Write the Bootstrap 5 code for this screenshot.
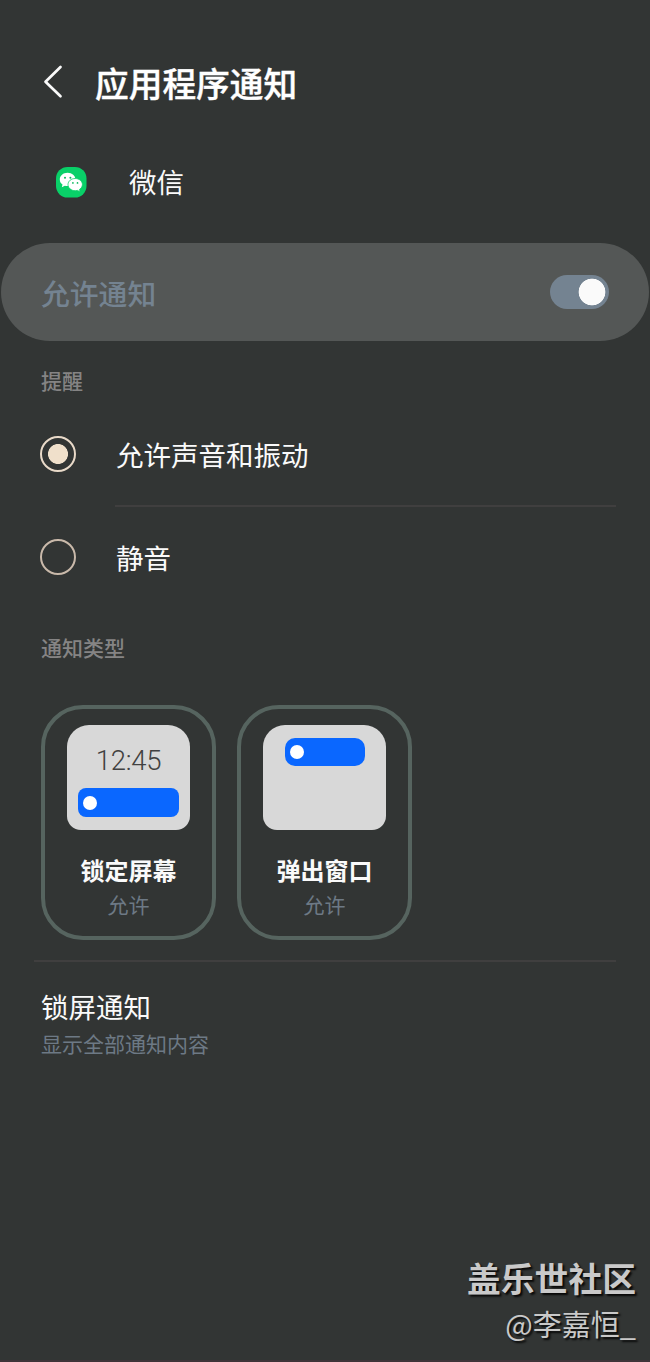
<!DOCTYPE html>
<html lang="zh-CN" data-bs-theme="dark">
<head>
<meta charset="utf-8">
<meta name="viewport" content="width=device-width, initial-scale=1">
<title>应用程序通知</title>
<link href="https://cdn.jsdelivr.net/npm/bootstrap@5.3.0/dist/css/bootstrap.min.css" rel="stylesheet">
<style>
  body { background: #323534; color: #fafafa; font-family: "Noto Sans CJK SC", sans-serif; }
  .screen { height: 1362px; border-bottom: 2px solid #3f3439; }
  .page-header { height: 56px; margin-top: 56px; padding-left: 42px; }
  .page-title { font-size: 33.7px; font-weight: 500; margin-left: 30px; padding-bottom: 2px; -webkit-text-stroke: .4px; }
  .app-row { height: 54px; margin-top: 43px; padding-left: 55px; }
  .item-text { font-size: 27.5px; line-height: 38px; padding-bottom: 2px; }
  .app-name { margin-left: 42px; }
  .switch-bar { height: 98px; margin: 33.5px 1px 0; padding: 0 40px; border-radius: 49px; background: #545756; }
  .switch-label { font-size: 28.8px; font-weight: 500; color: #748391; padding-top: 3px; }
  .form-check-input.toggle { width: 59px; height: 34px; margin: 0; border: 0; background-color: #748391; border-radius: 17px;
    background-image: radial-gradient(circle at 42px 17px, #fafafa 13px, transparent 13.7px); background-size: 100% 100%; opacity: 1; }
  .section-label { font-size: 21px; line-height: 30px; padding-bottom: 2px; font-weight: 500; color: #858484; padding-left: 41px; }
  .option-row { height: 101px; padding-left: 40px; gap: 40px; }
  .form-check-input.ring { width: 36px; height: 36px; margin: -1px 0 0; border: 2px solid #c9b9aa; background: transparent; }
  .form-check-input.ring:checked { border-color: #e9dac9; background: radial-gradient(circle, #f0e0cb 9.6px, transparent 10.3px); }
  .rule { height: 2px; margin-right: 34px; background: #403f3f; }
  .type-cards { gap: 21px; margin: 41px 0 0 41px; }
  .type-card { width: 175px; height: 235px; border: 4px solid #56645f; border-radius: 42px; padding-top: 16px; }
  .preview { width: 123px; height: 105px; border-radius: 22px 22px 14px 14px; background: #d8d8d8; }
  .clock { font: 300 27.5px/34px Roboto, sans-serif; letter-spacing: -.3px; color: #414141; margin-top: 19px; }
  .banner { background: #0a67ff; padding-left: 5px; }
  .banner-lock { width: 101px; height: 29px; border-radius: 8px; margin-top: 10px; }
  .banner-pop { width: 80px; height: 28px; border-radius: 10px; margin-top: 13px; }
  .dot { width: 14px; height: 14px; background: #fff; }
  .card-name { font-size: 24px; line-height: 36px; font-weight: 700; margin-top: 22px; }
  .sub { font-size: 21px; line-height: 32px; color: #6d7985; }
  .lock-item { padding: 25px 0 0 41px; }
  .signature { margin: auto 14px 16px 0; color: #c9c9c9; text-shadow: 2px 2px 2px #080808; }
  .forum { font-size: 33.8px; line-height: 48px; font-weight: 700; }
  .author { font-size: 29px; line-height: 42px; }
</style>
</head>
<body>
<main class="screen d-flex flex-column overflow-hidden">
  <header class="page-header d-flex align-items-center flex-shrink-0">
    <svg width="23" height="36" viewBox="0 0 23 36" fill="none" stroke="#fafafa" stroke-width="2.7" stroke-linecap="round" stroke-linejoin="round" style="margin-top:-5px"><path d="M18.500 3 3.500 17.800 18.500 32.200"/></svg>
    <h1 class="page-title mb-0">应用程序通知</h1>
  </header>

  <div class="app-row d-flex align-items-center">
    <svg width="32" height="32" viewBox="0 0 32 32">
      <rect x="1" y="1" width="30.500" height="30.500" rx="11.500" fill="#09d068"/>
      <path fill="#fff" d="M12.600 6.800C8.200 6.800 4.800 9.700 4.800 13.500c0 2.100 1 3.900 2.700 5.100L6.800 21.200l3-1.500c.9.300 1.800.4 2.800.4 4.500 0 7.800-2.900 7.800-6.600s-3.300-6.700-7.800-6.700Z"/>
      <path fill="#fff" stroke="#09d068" stroke-width=".8" d="M20.200 12.500c-4 0-7.200 2.600-7.200 6.100s3.200 6.100 7.200 6.100c.8 0 1.500-.1 2.200-.3l2.700 1.300-.6-2.300c1.700-1.100 2.900-2.800 2.900-4.800 0-3.500-3.200-6.100-7.200-6.100Z"/>
      <g fill="#09b85c"><circle cx="10" cy="11.700" r="1"/><circle cx="15.400" cy="11.700" r="1"/><circle cx="17.900" cy="16.900" r=".85"/><circle cx="22.500" cy="16.900" r=".85"/></g>
    </svg>
    <span class="item-text app-name">微信</span>
  </div>

  <label class="switch-bar d-flex align-items-center justify-content-between">
    <span class="switch-label">允许通知</span>
    <input class="form-check-input toggle" type="checkbox" checked>
  </label>

  <div class="section-label" style="margin-top:24.5px">提醒</div>
  <label class="option-row d-flex align-items-center" style="margin-top:7px">
    <input class="form-check-input ring" type="radio" name="alert" checked>
    <span class="item-text">允许声音和振动</span>
  </label>
  <div class="rule" style="margin-left:115px"></div>
  <label class="option-row d-flex align-items-center">
    <input class="form-check-input ring" type="radio" name="alert">
    <span class="item-text">静音</span>
  </label>

  <div class="section-label" style="margin-top:24px">通知类型</div>
  <div class="type-cards d-flex">
    <div class="type-card d-flex flex-column align-items-center">
      <div class="preview d-flex flex-column align-items-center">
        <div class="clock">12:45</div>
        <div class="banner banner-lock d-flex align-items-center"><span class="dot rounded-circle"></span></div>
      </div>
      <div class="card-name">锁定屏幕</div>
      <div class="sub">允许</div>
    </div>
    <div class="type-card d-flex flex-column align-items-center">
      <div class="preview d-flex flex-column align-items-center">
        <div class="banner banner-pop d-flex align-items-center"><span class="dot rounded-circle"></span></div>
      </div>
      <div class="card-name">弹出窗口</div>
      <div class="sub">允许</div>
    </div>
  </div>

  <div class="rule flex-shrink-0" style="margin:20px 34px 0"></div>
  <div class="lock-item">
    <div class="item-text">锁屏通知</div>
    <div class="sub">显示全部通知内容</div>
  </div>

  <footer class="signature text-end">
    <div class="forum">盖乐世社区</div>
    <div class="author">@李嘉恒_</div>
  </footer>
</main>
<script src="https://cdn.jsdelivr.net/npm/bootstrap@5.3.0/dist/js/bootstrap.bundle.min.js"></script>
</body>
</html>
